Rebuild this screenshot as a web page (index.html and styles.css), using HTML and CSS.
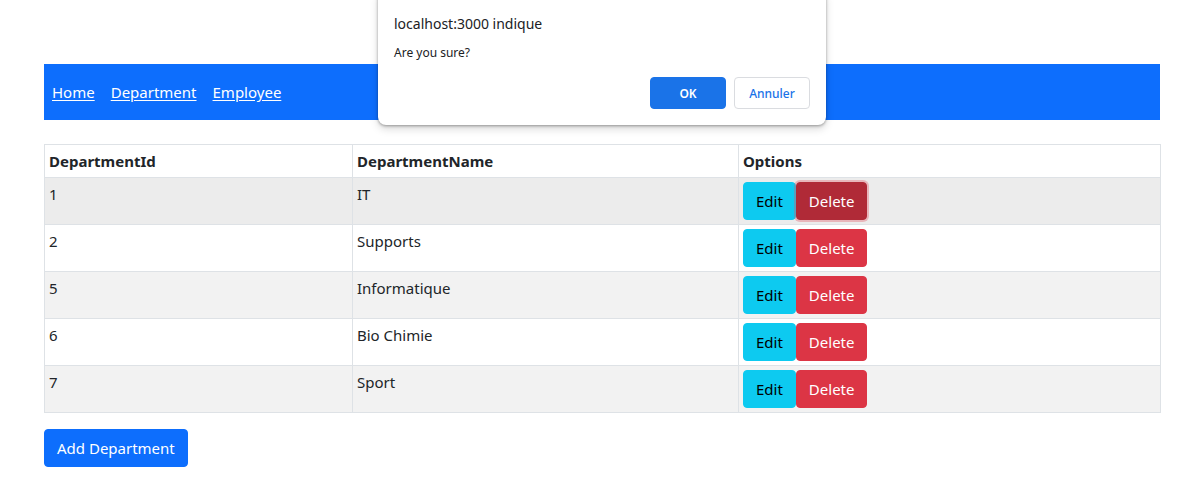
FILE: index.html
```html
<!DOCTYPE html>
<html lang="fr">
<head>
<meta charset="utf-8">
<title>Departments</title>
<link rel="stylesheet" href="styles.css">
</head>
<body>
<div class="page">
  <nav class="navbar">
    <a href="#" class="nav-link">Home</a>
    <a href="#" class="nav-link">Department</a>
    <a href="#" class="nav-link">Employee</a>
  </nav>
  <table class="table">
    <thead>
      <tr><th class="c1">DepartmentId</th><th class="c2">DepartmentName</th><th class="c3">Options</th></tr>
    </thead>
    <tbody>
      <tr class="odd hover"><td>1</td><td>IT</td><td><button class="btn btn-info">Edit</button><button class="btn btn-danger active">Delete</button></td></tr>
      <tr><td>2</td><td>Supports</td><td><button class="btn btn-info">Edit</button><button class="btn btn-danger">Delete</button></td></tr>
      <tr class="odd"><td>5</td><td>Informatique</td><td><button class="btn btn-info">Edit</button><button class="btn btn-danger">Delete</button></td></tr>
      <tr><td>6</td><td>Bio Chimie</td><td><button class="btn btn-info">Edit</button><button class="btn btn-danger">Delete</button></td></tr>
      <tr class="odd"><td>7</td><td>Sport</td><td><button class="btn btn-info">Edit</button><button class="btn btn-danger">Delete</button></td></tr>
    </tbody>
  </table>
  <button class="btn btn-primary">Add Department</button>
</div>

<div class="dialog">
  <div class="dialog-title">localhost:3000 indique</div>
  <div class="dialog-msg">Are you sure?</div>
  <div class="dialog-actions">
    <button class="dbtn dbtn-ok">OK</button>
    <button class="dbtn dbtn-cancel">Annuler</button>
  </div>
</div>
</body>
</html>
```
FILE: styles.css
```css
* { box-sizing: border-box; }
html, body { margin: 0; padding: 0; background: #fff; }
body {
  font-family: "Noto Sans", "Segoe UI", sans-serif;
  font-size: 15px;
  line-height: 24px;
  color: #212529;
}
.page {
  width: 1116px;
  margin-left: 44px;
  padding-top: 64px;
}
.navbar {
  background: #0d6efd;
  height: 56px;
  display: flex;
  align-items: center;
  gap: 16px;
  padding-left: 8px;
}
.nav-link {
  color: #fff;
  text-decoration: underline;
  text-underline-offset: 2px;
}
.table {
  margin-top: 24px;
  width: 1116px;
  border-collapse: collapse;
  table-layout: fixed;
  margin-bottom: 16px;
}
.table th, .table td {
  border: 1px solid #dee2e6;
  padding: 4px 4px;
  text-align: left;
  vertical-align: top;
}
.table th { font-weight: 700; }
.c1 { width: 308px; }
.c2 { width: 386px; }
.c3 { width: 422px; }
.table tbody tr.odd td { background: #f2f2f2; }
.table tbody tr.hover td { background: #ececec; }
.btn {
  font-family: inherit;
  font-size: 15px;
  line-height: 24px;
  padding: 6px 12px;
  border: 1px solid transparent;
  border-radius: 4px;
  cursor: pointer;
}
.btn-info { background: #0dcaf0; border-color: #0dcaf0; color: #000; }
.btn-danger { background: #dc3545; border-color: #dc3545; color: #fff; }
.btn-danger.active { background: #b02a37; border-color: #b02a37; box-shadow: 0 0 0 2px rgba(225,83,97,.35); }
.btn-primary { background: #0d6efd; border-color: #0d6efd; color: #fff; }

.dialog {
  position: absolute;
  left: 378px;
  top: -10px;
  width: 448px;
  height: 135px;
  background: #fff;
  border-radius: 8px;
  box-shadow: 0 1px 3px rgba(0,0,0,.35), 0 4px 8px rgba(0,0,0,.15);
  padding: 24px 16px 0 16px;
  font-family: "Noto Sans", "Segoe UI", sans-serif;
  color: #202124;
}
.dialog-title { font-size: 14px; line-height: 20px; }
.dialog-msg { font-size: 12px; line-height: 16px; margin-top: 11px; }
.dialog-actions {
  display: flex;
  justify-content: flex-end;
  gap: 8px;
  margin-top: 16px;
}
.dbtn {
  width: 76px;
  height: 32px;
  border-radius: 4px;
  font-family: inherit;
  font-size: 12px;
  font-weight: 600;
}
.dbtn-ok { background: #1a73e8; border: 1px solid #1a73e8; color: #fff; }
.dbtn-cancel { background: #fff; border: 1px solid #dadce0; color: #1a73e8; font-weight: 500; }
```
